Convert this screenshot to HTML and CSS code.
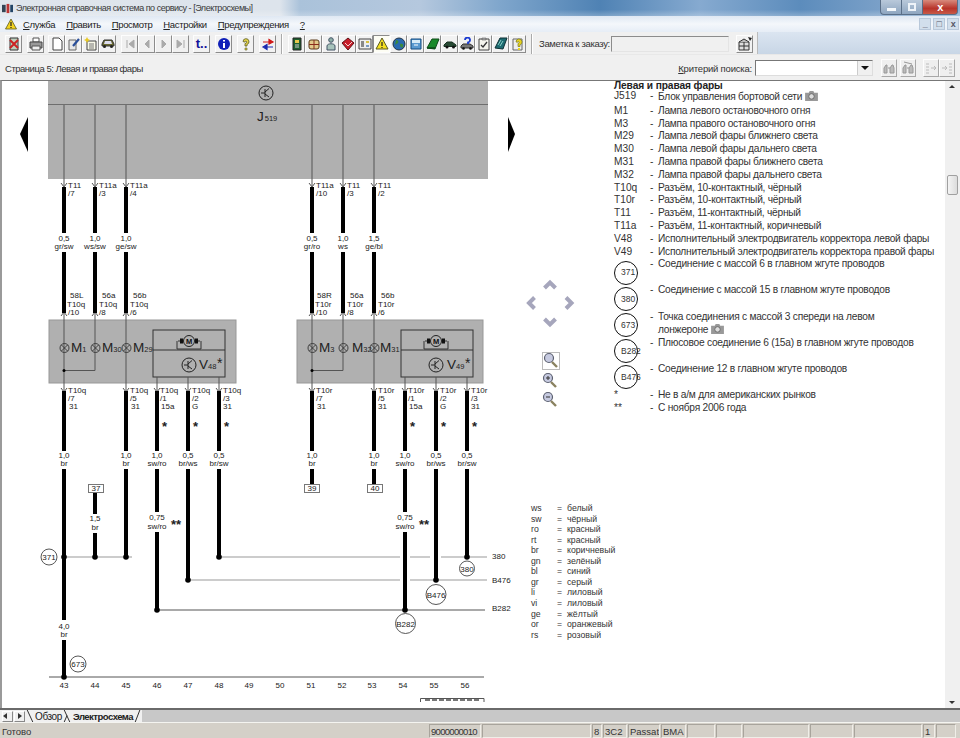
FILE: index.html
```html
<!DOCTYPE html>
<html lang="ru">
<head>
<meta charset="utf-8">
<title>Электронная справочная система по сервису</title>
<link rel="stylesheet" href="styles.css">
</head>
<body>
<div class="app">
  <header class="titlebar">
    <svg class="appicon" viewBox="0 0 14 12"><rect x="1" y="2" width="4" height="8" fill="#345"/><rect x="6" y="1" width="3" height="10" fill="#b33"/><rect x="10" y="2" width="3" height="8" fill="#246"/></svg>
    <span class="title-text">Электронная справочная система по сервису - [Электросхемы]</span>
    <div class="winctl">
      <span class="wbtn wmin"><i></i></span>
      <span class="wbtn wmax"><i></i></span>
      <span class="wbtn wclose">x</span>
    </div>
  </header>

  <nav class="menubar">
    <svg class="menu-warn" viewBox="0 0 12 12"><path d="M6 1 11.5 11H.5Z" fill="#f3d321" stroke="#5a5a20" stroke-width=".8"/><path d="M6 4v4M6 9v1" stroke="#222" stroke-width="1.2"/></svg>
    <span class="menu"><u>С</u>лужба</span>
    <span class="menu"><u>П</u>равить</span>
    <span class="menu"><u>П</u>росмотр</span>
    <span class="menu"><u>Н</u>астройки</span>
    <span class="menu"><u>П</u>редупреждения</span>
    <span class="menu"><u>?</u></span>
    <div class="mdi">
      <span class="mdibtn">_</span><span class="mdibtn">&#9633;</span><span class="mdibtn">x</span>
    </div>
  </nav>

  <div class="toolbar">
    <div class="tools">
      <button class="tb"><svg viewBox="0 0 14 14"><path d="M3 1h8v12H3z" fill="#bcd0bc" stroke="#333"/><path d="M3 3l8 8M11 3l-8 8" stroke="#c22" stroke-width="2"/></svg></button>
      <button class="tb gap5"><svg viewBox="0 0 14 14"><path d="M4 1h6v4H4z" fill="#fff" stroke="#555"/><path d="M1 5h12v6H1z" fill="#999" stroke="#444"/><path d="M3 9h8v4H3z" fill="#eee" stroke="#555"/></svg></button>
      <button class="tb gap4"><svg viewBox="0 0 14 14"><path d="M3 1h6l3 3v9H3z" fill="#fff" stroke="#444"/></svg></button>
      <button class="tb"><svg viewBox="0 0 14 14"><path d="M2 3h7v10H2z" fill="#e8e8e8" stroke="#666"/><path d="M6 9l6-7" stroke="#2a4f9a" stroke-width="2.2"/></svg></button>
      <button class="tb"><svg viewBox="0 0 14 14"><path d="M3 4h9v9H3z" fill="#f8f8e8" stroke="#444"/><path d="M5 7h5M5 9h5M5 11h5" stroke="#777"/><path d="M3 0l1 2 2 1-2 1-1 2-1-2-2-1 2-1z" fill="#e8c820"/></svg></button>
      <button class="tb"><svg viewBox="0 0 14 14"><path d="M1 9V7l2-4h8l2 4v2z" fill="#6a6a30" stroke="#333"/><path d="M4 4h6l1 3H3z" fill="#dde"/><circle cx="3.5" cy="9.5" r="1.5" fill="#222"/><circle cx="10.5" cy="9.5" r="1.5" fill="#222"/></svg></button>

      <button class="tb gap5 off"><svg viewBox="0 0 14 14"><path d="M4 3v8M11 3 6 7l5 4z" fill="#aaa" stroke="#aaa"/></svg></button>
      <button class="tb off"><svg viewBox="0 0 14 14"><path d="M9 3 5 7l4 4z" fill="#aaa" stroke="#aaa"/></svg></button>
      <button class="tb off"><svg viewBox="0 0 14 14"><path d="M5 3l4 4-4 4z" fill="#aaa" stroke="#aaa"/></svg></button>
      <button class="tb off"><svg viewBox="0 0 14 14"><path d="M10 3v8M3 3l5 4-5 4z" fill="#aaa" stroke="#aaa"/></svg></button>

      <button class="tb gap4 tlet">t..</button>
      <button class="tb gap5"><svg viewBox="0 0 14 14"><circle cx="7" cy="7" r="6" fill="#1020b8"/><path d="M7 3v1.5M7 6v5" stroke="#fff" stroke-width="2"/></svg></button>
      <button class="tb gap5"><svg viewBox="0 0 14 14"><path d="M4 4.500a3 3 0 1 1 4 3V9H6V6.500c1.500-.3 2-1 1.500-2-.5-.6-1.500-.3-1.500.6z" fill="#e3d34a" stroke="#5a5a20" stroke-width=".8"/><path d="M6 11h2v2H6z" fill="#e3d34a" stroke="#5a5a20" stroke-width=".6"/></svg></button>
      <button class="tb gap5"><svg viewBox="0 0 14 14"><path d="M2 5h8M8 2.500 12 5 8 7z" fill="#d01818" stroke="#d01818" stroke-width="1.200"/><path d="M12 10H4M6 7.500 2 10l4 2.500z" fill="#1a2ab0" stroke="#1a2ab0" stroke-width="1.200"/></svg></button>
      <span class="tsep"></span>

      <button class="tb"><svg viewBox="0 0 14 14"><path d="M3 1h8v12H3z" fill="#1f5f2f" stroke="#222"/><path d="M5 3h4v3H5z" fill="#e6c84a"/><path d="M5 8h4M5 10h4" stroke="#ccc"/></svg></button>
      <button class="tb"><svg viewBox="0 0 14 14"><rect x="2" y="3" width="10" height="9" rx="2" fill="#e2c98a" stroke="#5a3a1a"/><path d="M7 3v9M2 7.500h10" stroke="#8a2a1a"/></svg></button>
      <button class="tb"><svg viewBox="0 0 14 14"><circle cx="7" cy="3" r="2.300" fill="#8fb0a8" stroke="#456"/><path d="M3 13V9c0-3 8-3 8 0v4z" fill="#a8c4bc" stroke="#456"/></svg></button>
      <button class="tb"><svg viewBox="0 0 14 14"><path d="M1 6 7 1l6 5-6 7z" fill="#c81e2a" stroke="#601015"/><path d="M4 6l3 3 4-4" stroke="#f0d0d0" fill="none"/></svg></button>
      <button class="tb"><svg viewBox="0 0 14 14"><path d="M1 2h12v10H1z" fill="#eee" stroke="#444"/><path d="M3 4h3v6H3z" fill="#888"/><path d="M8 4h3v2H8z" fill="#d8c040"/><path d="M8 8h3v2H8z" fill="#7a9ac0"/></svg></button>
      <button class="tb on"><svg viewBox="0 0 14 14"><path d="M7 1l6 11H1z" fill="#f5e020" stroke="#5a5a20"/><path d="M7 5v4M7 10v1" stroke="#222" stroke-width="1.200"/></svg></button>
      <button class="tb"><svg viewBox="0 0 14 14"><circle cx="7" cy="7" r="6" fill="#2a6ab0" stroke="#234"/><path d="M4 3c2 0 3 2 2 3S3 7 3 9M8 7c2-1 4 0 3 3-1 1-3 1-3-3z" fill="#3c8a3c"/></svg></button>
      <button class="tb"><svg viewBox="0 0 14 14"><path d="M2 2h10v10H2z" fill="#5a9ad0" stroke="#134a80"/><path d="M3 3h8v3H3z" fill="#d8ecf8"/><path d="M5 8h4" stroke="#fff"/></svg></button>
      <button class="tb"><svg viewBox="0 0 14 14"><path d="M1 11 6 2h7l-4 10z" fill="#1a8a2a" stroke="#0e4a18"/><path d="M1 11h8" stroke="#0e4a18" stroke-width="1.500"/></svg></button>
      <button class="tb"><svg viewBox="0 0 14 14"><path d="M1 9.500V8l3-3h5l4 3v1.500z" fill="#284a34" stroke="#16301f"/><circle cx="4" cy="10" r="1.500" fill="#111"/><circle cx="10.500" cy="10" r="1.500" fill="#111"/></svg></button>
      <button class="tb"><svg viewBox="0 0 14 14"><path d="M1 11V9l2-2h7l3 2v2z" fill="#777" stroke="#333"/><circle cx="3.500" cy="11.500" r="1.300" fill="#111"/><circle cx="10.500" cy="11.500" r="1.300" fill="#111"/><path d="M5 3a2.500 2.500 0 1 1 3 2.500V7" fill="none" stroke="#1a3ad0" stroke-width="1.800"/></svg></button>
      <button class="tb"><svg viewBox="0 0 14 14"><path d="M2 2h10v11H2z" fill="#f4f4ec" stroke="#444"/><path d="M5 1h4v2H5z" fill="#aaa" stroke="#444" stroke-width=".5"/><path d="M4 8l2 2 4-5" fill="none" stroke="#333" stroke-width="1.300"/></svg></button>
      <button class="tb"><svg viewBox="0 0 14 14"><path d="M1 11 6 1h7l-4 11z" fill="#1d6a70" stroke="#0e3034"/><path d="M4 8l3-5M6 9l3-5" stroke="#bfe" stroke-width=".7"/></svg></button>
      <button class="tb"><svg viewBox="0 0 14 14"><path d="M2 2h9v11H2z" fill="#eee" stroke="#666"/><path d="M5 5a3 3 0 1 1 4 2.800V9.500H7V6.500c1.300 0 1.500-2 .3-2-.6 0-.8.400-.8.800z" fill="#e8d420" stroke="#6a6a10" stroke-width=".6"/><path d="M7 11h2v2H7z" fill="#e8d420"/></svg></button>
      <span class="tsep sep-b"></span>

      <label class="note-label">Заметка к заказу:</label>
      <span class="note-input"></span>
      <button class="tb gap7"><svg viewBox="0 0 14 14"><path d="M1 5h10v8H1z" fill="#ddd" stroke="#333"/><path d="M1 5l5-3 5 3" fill="#bbb" stroke="#333"/><path d="M6 5v8M1 9h10" stroke="#333"/><path d="M10 0l4 1-2 3z" fill="#222"/></svg></button>
    </div>
    <div class="toolfill"></div>
  </div>

  <div class="pagebar">
    <span class="page-name">Страница 5: Левая и правая фары</span>
    <div class="search">
      <span class="search-label"><u>К</u>ритерий поиска:</span>
      <span class="combo"><i class="combo-arrow"></i></span>
      <button class="tb sb gap8"><svg viewBox="0 0 14 14"><path d="M2 12V7l2-3h1v8zM8 12V7l2-3h1l1 3v5z" fill="#bbb" stroke="#999"/><path d="M6 7h2" stroke="#999"/></svg></button>
      <button class="tb sb gap3"><svg viewBox="0 0 14 14"><path d="M2 12V7l2-3h1v8zM8 12V7l2-3h1l1 3v5z" fill="#bbb" stroke="#999"/><path d="M6 7h2M3 1l8 2" stroke="#999"/></svg></button>
      <button class="tb sb gap7"><svg viewBox="0 0 14 14"><path d="M2 3h3M2 6h3M2 9h3M2 12h3" stroke="#bbb"/><path d="M7 7h5M10 5l2 2-2 2" stroke="#bbb" fill="none"/></svg></button>
      <button class="tb sb"><svg viewBox="0 0 14 14"><path d="M9 3h3M9 6h3M9 9h3M9 12h3" stroke="#bbb"/><path d="M2 7h5M5 5l2 2-2 2" stroke="#bbb" fill="none"/></svg></button>
    </div>
  </div>

  <main class="workspace">
    <svg class="diagram" viewBox="2 81 608 627">
      <defs>
        <symbol id="tr" viewBox="-8 -8 16 16" overflow="visible">
          <circle r="7" fill="none" stroke="#222" stroke-width="1"/>
          <path d="M-1-4V4M-1-1 3-4.500M-1 1l4 3M-5 0h4" fill="none" stroke="#222" stroke-width="1"/>
        </symbol>
        <symbol id="lamp" viewBox="-5 -5 10 10" overflow="visible">
          <circle r="4.500" fill="none" stroke="#333" stroke-width=".9"/>
          <path d="M-3.200-3.200 3.200 3.200M3.200-3.200-3.200 3.200" stroke="#333" stroke-width=".9"/>
        </symbol>
        <symbol id="motor" viewBox="-14 -9 28 18" overflow="visible">
          <path d="M-11 0H-6M6 0H11M-12 0V8H12V0" fill="none" stroke="#333"/>
          <path d="M-9-2.500h3v5h-3zM6-2.500h3v5H6z" fill="#111"/>
          <circle r="5.500" fill="#b0b0b0" stroke="#222"/>
          <text class="mm" y="3">M</text>
        </symbol>
      </defs>

      <rect class="block" x="48" y="81" width="440" height="98"/>
      <path class="midline" d="M48 104.500H488"/>
      <use href="#tr" x="258" y="85" width="16" height="16"/>
      <text class="big" x="257" y="121">J<tspan class="sub" dx="1">519</tspan></text>

      <path class="nav-tri" d="M28 117 20 134l8 18z"/>
      <path class="nav-tri" d="M508 117l7 17-7 18z"/>

      <rect class="block bb" x="49" y="320" width="187" height="63"/>
      <rect class="block bb" x="297" y="320" width="186" height="63"/>
      <rect class="inner" x="153" y="330" width="72" height="47"/>
      <rect class="inner" x="401" y="330" width="72" height="47"/>
      <path class="inner-line" d="M153 350H225M401 350H473"/>

      <path class="thin" d="M64 105V186M95 105V186M126 105V186M312 105V186M343 105V186M374 105V186"/>
      <path class="thin" d="M64 313V391M95 313V370.500H64M126 313V391M312 313V391M343 313V370.500H312M374 313V391"/>
      <path class="thin" d="M157 377V391M188 377V391M219 377V391M405 377V391M436 377V391M467 377V391"/>
      <path class="arrows" d="M61 183l3 4 3-4M92 183l3 4 3-4M123 183l3 4 3-4M309 183l3 4 3-4M340 183l3 4 3-4M371 183l3 4 3-4"/>
      <path class="arrows" d="M61 316l3-4 3 4M92 316l3-4 3 4M123 316l3-4 3 4M309 316l3-4 3 4M340 316l3-4 3 4M371 316l3-4 3 4"/>
      <path class="arrows" d="M61 388l3 4 3-4M123 388l3 4 3-4M154 388l3 4 3-4M185 388l3 4 3-4M216 388l3 4 3-4M309 388l3 4 3-4M371 388l3 4 3-4M402 388l3 4 3-4M433 388l3 4 3-4M464 388l3 4 3-4"/>
      <circle class="dot" cx="64" cy="370.500" r="1.500"/>
      <circle class="dot" cx="312" cy="370.500" r="1.500"/>

      <path class="thick" d="M64 187V233M64 252V313M95 187V233M95 252V313M126 187V233M126 252V313M312 187V233M312 252V313M343 187V233M343 252V313M374 187V233M374 252V313"/>
      <path class="thick" d="M64 391V451M64 469V620M64 640V677M126 391V451M126 469V557M157 391V451M157 469V512M157 532V610M188 391V451M188 469V580M219 391V451M219 469V557"/>
      <path class="thick" d="M312 391V451M312 469V484M374 391V451M374 469V484M405 391V451M405 469V512M405 532V610M436 391V451M436 469V580M467 391V451M467 469V557M95 492V514M95 533V557"/>

      <path class="hline" d="M64 557H132M219 557H400M410 557H430M441 557H487M188 580H400M410 580H487"/>
      <path class="hdark" d="M157 610H485M49 677H484"/>
      <circle class="node" cx="64" cy="557" r="2.800"/><circle class="node" cx="95" cy="557" r="2.800"/><circle class="node" cx="126" cy="557" r="2.800"/>
      <circle class="node" cx="219" cy="557" r="2.800"/><circle class="node" cx="188" cy="580" r="2.800"/><circle class="node" cx="157" cy="610" r="2.800"/>
      <circle class="node" cx="467" cy="557" r="2.800"/><circle class="node" cx="436" cy="580" r="2.800"/><circle class="node" cx="405" cy="610" r="2.800"/><circle class="node" cx="64" cy="677" r="2.800"/>

      <text class="l" x="68" y="188">T11</text><text class="l" x="68" y="196">/7</text>
      <text class="l" x="99" y="188">T11a</text><text class="l" x="99" y="196">/3</text>
      <text class="l" x="130" y="188">T11a</text><text class="l" x="130" y="196">/4</text>
      <text class="l" x="316" y="188">T11a</text><text class="l" x="316" y="196">/10</text>
      <text class="l" x="347" y="188">T11</text><text class="l" x="347" y="196">/3</text>
      <text class="l" x="378" y="188">T11</text><text class="l" x="378" y="196">/2</text>

      <text class="c" x="64" y="241">0,5</text><text class="c" x="64" y="249">gr/sw</text>
      <text class="c" x="95" y="241">1,0</text><text class="c" x="95" y="249">ws/sw</text>
      <text class="c" x="126" y="241">1,0</text><text class="c" x="126" y="249">ge/sw</text>
      <text class="c" x="312" y="241">0,5</text><text class="c" x="312" y="249">gr/ro</text>
      <text class="c" x="343" y="241">1,0</text><text class="c" x="343" y="249">ws</text>
      <text class="c" x="374" y="241">1,5</text><text class="c" x="374" y="249">ge/bl</text>

      <text class="l" x="70" y="298">58L</text><text class="l" x="67" y="307">T10q</text><text class="l" x="68" y="315">/10</text>
      <text class="l" x="102" y="298">56a</text><text class="l" x="99" y="307">T10q</text><text class="l" x="99" y="315">/8</text>
      <text class="l" x="133" y="298">56b</text><text class="l" x="130" y="307">T10q</text><text class="l" x="130" y="315">/6</text>
      <text class="l" x="317" y="298">58R</text><text class="l" x="315" y="307">T10r</text><text class="l" x="316" y="315">/10</text>
      <text class="l" x="350" y="298">56a</text><text class="l" x="347" y="307">T10r</text><text class="l" x="347" y="315">/8</text>
      <text class="l" x="381" y="298">56b</text><text class="l" x="378" y="307">T10r</text><text class="l" x="378" y="315">/6</text>

      <use href="#lamp" x="59.500" y="343" width="10" height="10"/>
      <use href="#lamp" x="90.500" y="343" width="10" height="10"/>
      <use href="#lamp" x="121.500" y="343" width="10" height="10"/>
      <use href="#lamp" x="307.500" y="343" width="10" height="10"/>
      <use href="#lamp" x="338.500" y="343" width="10" height="10"/>
      <use href="#lamp" x="369.500" y="343" width="10" height="10"/>
      <text class="big" x="71" y="352">M<tspan class="sub">1</tspan></text>
      <text class="big" x="102" y="352">M<tspan class="sub">30</tspan></text>
      <text class="big" x="133" y="352">M<tspan class="sub">29</tspan></text>
      <text class="big" x="319" y="352">M<tspan class="sub">3</tspan></text>
      <text class="big" x="352" y="352">M<tspan class="sub">32</tspan></text>
      <text class="big" x="380" y="352">M<tspan class="sub">31</tspan></text>

      <use href="#motor" x="175" y="332" width="28" height="18"/>
      <use href="#motor" x="422" y="332" width="28" height="18"/>
      <use href="#tr" x="181" y="357" width="16" height="16"/>
      <use href="#tr" x="428" y="357" width="16" height="16"/>
      <text class="big" x="199" y="369">V<tspan class="sub">48</tspan></text>
      <text class="star" x="217" y="368">*</text>
      <text class="big" x="447" y="369">V<tspan class="sub">49</tspan></text>
      <text class="star" x="465" y="368">*</text>

      <text class="l" x="68" y="393">T10q</text><text class="l" x="68" y="401">/7</text><text class="l" x="69" y="409">31</text>
      <text class="l" x="130" y="393">T10q</text><text class="l" x="130" y="401">/5</text><text class="l" x="131" y="409">31</text>
      <text class="l" x="160" y="393">T10q</text><text class="l" x="160" y="401">/1</text><text class="l" x="161" y="409">15a</text>
      <text class="l" x="192" y="393">T10q</text><text class="l" x="192" y="401">/2</text><text class="l" x="192" y="409">G</text>
      <text class="l" x="223" y="393">T10q</text><text class="l" x="223" y="401">/3</text><text class="l" x="223" y="409">31</text>
      <text class="l" x="316" y="393">T10r</text><text class="l" x="316" y="401">/7</text><text class="l" x="317" y="409">31</text>
      <text class="l" x="378" y="393">T10r</text><text class="l" x="378" y="401">/5</text><text class="l" x="378" y="409">31</text>
      <text class="l" x="408" y="393">T10r</text><text class="l" x="408" y="401">/1</text><text class="l" x="409" y="409">15a</text>
      <text class="l" x="440" y="393">T10r</text><text class="l" x="440" y="401">/2</text><text class="l" x="440" y="409">G</text>
      <text class="l" x="471" y="393">T10r</text><text class="l" x="471" y="401">/3</text><text class="l" x="471" y="409">31</text>

      <text class="ast" x="162" y="431">*</text><text class="ast" x="193" y="431">*</text><text class="ast" x="224" y="431">*</text>
      <text class="ast" x="410" y="431">*</text><text class="ast" x="441" y="431">*</text><text class="ast" x="472" y="431">*</text>
      <text class="ast" x="171" y="529">**</text><text class="ast" x="419" y="529">**</text>

      <text class="c" x="64" y="458">1,0</text><text class="c" x="64" y="466">br</text>
      <text class="c" x="126" y="458">1,0</text><text class="c" x="126" y="466">br</text>
      <text class="c" x="157" y="458">1,0</text><text class="c" x="157" y="466">sw/ro</text>
      <text class="c" x="188" y="458">0,5</text><text class="c" x="188" y="466">br/ws</text>
      <text class="c" x="219" y="458">0,5</text><text class="c" x="219" y="466">br/sw</text>
      <text class="c" x="312" y="458">1,0</text><text class="c" x="312" y="466">br</text>
      <text class="c" x="374" y="458">1,0</text><text class="c" x="374" y="466">br</text>
      <text class="c" x="405" y="458">1,0</text><text class="c" x="405" y="466">sw/ro</text>
      <text class="c" x="436" y="458">0,5</text><text class="c" x="436" y="466">br/ws</text>
      <text class="c" x="467" y="458">0,5</text><text class="c" x="467" y="466">br/sw</text>

      <rect class="ref" x="88.500" y="484.500" width="15" height="8"/><text class="c" x="96" y="491">37</text>
      <rect class="ref" x="304.500" y="484.500" width="15" height="8"/><text class="c" x="312" y="491">39</text>
      <rect class="ref" x="367.500" y="484.500" width="15" height="8"/><text class="c" x="375" y="491">40</text>

      <text class="c" x="95" y="521">1,5</text><text class="c" x="95" y="530">br</text>
      <text class="c" x="157" y="520">0,75</text><text class="c" x="157" y="529">sw/ro</text>
      <text class="c" x="405" y="520">0,75</text><text class="c" x="405" y="529">sw/ro</text>
      <text class="c" x="64" y="629">4,0</text><text class="c" x="64" y="637">br</text>

      <circle class="ring" cx="49" cy="557" r="8"/><text class="c" x="49" y="560">371</text>
      <circle class="ring" cx="78" cy="664" r="8"/><text class="c" x="78" y="667">673</text>
      <circle class="ring" cx="467" cy="568.500" r="7.500"/><text class="c" x="467" y="571.500">380</text>
      <circle class="ring" cx="436" cy="594.500" r="10"/><text class="c" x="436" y="597.500">B476</text>
      <circle class="ring" cx="405.500" cy="623.500" r="10"/><text class="c" x="405.500" y="626.500">B282</text>
      <text class="l" x="492" y="559">380</text>
      <text class="l" x="492" y="583">B476</text>
      <text class="l" x="492" y="611">B282</text>

      <text class="c" x="64" y="688">43</text><text class="c" x="95" y="688">44</text><text class="c" x="126" y="688">45</text>
      <text class="c" x="157" y="688">46</text><text class="c" x="188" y="688">47</text><text class="c" x="219" y="688">48</text>
      <text class="c" x="249" y="688">49</text><text class="c" x="280" y="688">50</text><text class="c" x="311" y="688">51</text>
      <text class="c" x="342" y="688">52</text><text class="c" x="372" y="688">53</text><text class="c" x="403" y="688">54</text>
      <text class="c" x="434" y="688">55</text><text class="c" x="465" y="688">56</text>
      <path class="stub" d="M420.500 702V698.500H484V702"/>
      <path class="stubdash" d="M425 700H480"/>

      <path class="chev" d="M544.500 288 550 282.500 555.500 288"/>
      <path class="chev" d="M534.500 297.500 529 303 534.500 308.500"/>
      <path class="chev" d="M566 297.500 571.500 303 566 308.500"/>
      <path class="chev" d="M544.500 319 550 324.500 555.500 319"/>
      <rect class="focusbox" x="542.500" y="352.500" width="17" height="17"/>
      <g class="zoomi"><circle cx="549" cy="358" r="4.500"/><path class="zh" d="M552 362l5 5"/></g>
      <g class="zoomi"><circle cx="548" cy="378" r="4.500"/><path class="zh" d="M551 382l5 5"/><path class="zs" d="M546 378h4M548 376v4"/></g>
      <g class="zoomi"><circle cx="548" cy="397" r="4.500"/><path class="zh" d="M551 401l5 5"/><path class="zs" d="M546 397h4"/></g>

      <g class="colors">
        <text x="531" y="511">ws</text><text x="557" y="511">=</text><text x="567" y="511">белый</text>
        <text x="531" y="522">sw</text><text x="557" y="522">=</text><text x="567" y="522">чёрный</text>
        <text x="531" y="532">ro</text><text x="557" y="532">=</text><text x="567" y="532">красный</text>
        <text x="531" y="543">rt</text><text x="557" y="543">=</text><text x="567" y="543">красный</text>
        <text x="531" y="553">br</text><text x="557" y="553">=</text><text x="567" y="553">коричневый</text>
        <text x="531" y="564">gn</text><text x="557" y="564">=</text><text x="567" y="564">зелёный</text>
        <text x="531" y="574">bl</text><text x="557" y="574">=</text><text x="567" y="574">синий</text>
        <text x="531" y="585">gr</text><text x="557" y="585">=</text><text x="567" y="585">серый</text>
        <text x="531" y="595">li</text><text x="557" y="595">=</text><text x="567" y="595">лиловый</text>
        <text x="531" y="606">vi</text><text x="557" y="606">=</text><text x="567" y="606">лиловый</text>
        <text x="531" y="617">ge</text><text x="557" y="617">=</text><text x="567" y="617">жёлтый</text>
        <text x="531" y="627">or</text><text x="557" y="627">=</text><text x="567" y="627">оранжевый</text>
        <text x="531" y="638">rs</text><text x="557" y="638">=</text><text x="567" y="638">розовый</text>
      </g>
    </svg>

    <section class="legend">
      <h2 class="legend-title">Левая и правая фары</h2>
      <div class="row first"><span class="code">J519</span><span class="dash">-</span><span class="txt">Блок управления бортовой сети <svg class="cam" viewBox="0 0 14 12"><path d="M0 3h4l1-2h4l1 2h4v9H0z" fill="#999"/><circle cx="7" cy="7" r="3" fill="#ddd" stroke="#666"/></svg></span></div>
      <div class="row"><span class="code">M1</span><span class="dash">-</span><span class="txt">Лампа левого остановочного огня</span></div>
      <div class="row"><span class="code">M3</span><span class="dash">-</span><span class="txt">Лампа правого остановочного огня</span></div>
      <div class="row"><span class="code">M29</span><span class="dash">-</span><span class="txt">Лампа левой фары ближнего света</span></div>
      <div class="row"><span class="code">M30</span><span class="dash">-</span><span class="txt">Лампа левой фары дальнего света</span></div>
      <div class="row"><span class="code">M31</span><span class="dash">-</span><span class="txt">Лампа правой фары ближнего света</span></div>
      <div class="row"><span class="code">M32</span><span class="dash">-</span><span class="txt">Лампа правой фары дальнего света</span></div>
      <div class="row"><span class="code">T10q</span><span class="dash">-</span><span class="txt">Разъём, 10-контактный, чёрный</span></div>
      <div class="row"><span class="code">T10r</span><span class="dash">-</span><span class="txt">Разъём, 10-контактный, чёрный</span></div>
      <div class="row"><span class="code">T11</span><span class="dash">-</span><span class="txt">Разъём, 11-контактный, чёрный</span></div>
      <div class="row"><span class="code">T11a</span><span class="dash">-</span><span class="txt">Разъём, 11-контактный, коричневый</span></div>
      <div class="row"><span class="code">V48</span><span class="dash">-</span><span class="txt">Исполнительный электродвигатель корректора левой фары</span></div>
      <div class="row"><span class="code">V49</span><span class="dash">-</span><span class="txt">Исполнительный электродвигатель корректора правой фары</span></div>
      <div class="row tall"><span class="code"><span class="circ">371</span></span><span class="dash">-</span><span class="txt">Соединение с массой 6 в главном жгуте проводов</span></div>
      <div class="row tall"><span class="code"><span class="circ">380</span></span><span class="dash">-</span><span class="txt">Соединение с массой 15 в главном жгуте проводов</span></div>
      <div class="row tall"><span class="code"><span class="circ">673</span></span><span class="dash">-</span><span class="txt">Точка соединения с массой 3 спереди на левом<br>лонжероне <svg class="cam" viewBox="0 0 14 12"><path d="M0 3h4l1-2h4l1 2h4v9H0z" fill="#999"/><circle cx="7" cy="7" r="3" fill="#ddd" stroke="#666"/></svg></span></div>
      <div class="row tall"><span class="code"><span class="circ">B282</span></span><span class="dash">-</span><span class="txt">Плюсовое соединение 6 (15а) в главном жгуте проводов</span></div>
      <div class="row tall"><span class="code"><span class="circ">B476</span></span><span class="dash">-</span><span class="txt">Соединение 12 в главном жгуте проводов</span></div>
      <div class="row"><span class="code">*</span><span class="dash">-</span><span class="txt">Не в а/м для американских рынков</span></div>
      <div class="row"><span class="code">**</span><span class="dash">-</span><span class="txt">С ноября 2006 года</span></div>
    </section>

    <aside class="scrollbar">
      <span class="sb-up"></span>
      <span class="sb-thumb"></span>
      <span class="sb-down"></span>
    </aside>
  </main>

  <div class="tabstrip">
    <span class="tabnav"><i class="tl"></i></span>
    <span class="tabnav"><i class="tr"></i></span>
    <svg class="slant" viewBox="0 0 8 13"><path d="M1 0 7 13" /></svg>
    <span class="tab">Обзор</span>
    <svg class="slant" viewBox="0 0 8 13"><path d="M1 0 7 13M4 6 1 13"/></svg>
    <span class="tab cur">Электросхема</span>
    <svg class="slant" viewBox="0 0 8 13"><path d="M6 0 1 13"/></svg>
    <span class="tabrest"></span>
  </div>

  <footer class="statusbar">
    <span class="ready">Готово</span>
    <span class="pane w51 tight">9000000010</span>
    <span class="pane w109"></span>
    <span class="pane w10">8</span>
    <span class="pane w23">3C2</span>
    <span class="pane w31">Passat</span>
    <span class="pane w25">BMA</span>
    <span class="pane w27"></span>
    <span class="pane w26"></span>
    <span class="pane w65"></span>
    <span class="pane w43"></span>
    <span class="pane w67"></span>
    <span class="pane w11">1</span>
    <span class="pane w20"></span>
  </footer>
</div>
</body>
</html>
```

FILE: styles.css
```css
* { box-sizing: border-box; }
html, body { margin: 0; padding: 0; }
body {
  width: 960px;
  height: 738px;
  overflow: hidden;
  font-family: "Liberation Sans", Arial, sans-serif;
  color: #2a2a2a;
}
.app { width: 960px; height: 738px; display: flex; flex-direction: column; background: #f0f0f0; }

/* title bar */
.titlebar {
  height: 16px;
  flex: none;
  display: flex;
  align-items: center;
  padding-left: 1px;
  font-size: 9px;
  letter-spacing: -.48px;
  color: #3a3a3a;
  background:
    linear-gradient(180deg, rgba(255,255,255,0) 60%, rgba(255,255,255,.25) 100%),
    linear-gradient(90deg, #dfe5ec 0, #dde4ec 280px, #aac2da 300px, #b5c8de 420px, #7fa6cc 500px, #4f82b4 600px, #86aad0 700px, #5c8cbc 800px, #7aa0c8 880px, #8ab0d4 960px);
}
.appicon { width: 13px; height: 11px; margin-right: 2px; }
.title-text { white-space: nowrap; }
.winctl { margin-left: auto; margin-right: 2px; display: flex; height: 15px; align-self: flex-start; }
.wbtn {
  display: flex; align-items: center; justify-content: center;
  height: 15px; color: #fff; font-size: 11px; font-weight: bold;
  border: 1px solid #5a6f88; border-top: 0;
  background: linear-gradient(180deg, #b9c9da, #8ea6c0);
}
.wbtn i { display: block; }
.wmin { width: 21px; border-radius: 0 0 0 4px; border-right: 0; }
.wmin i { width: 9px; height: 3px; background: #f4f8fb; margin-top: 5px; }
.wmax { width: 21px; border-right: 0; }
.wmax i { width: 8px; height: 8px; border: 2px solid #eef3f8; }
.wclose { width: 36px; border-radius: 0 0 4px 0; background: linear-gradient(180deg, #d88a7c, #b8342a 60%, #c85a48); }

/* menu */
.menubar {
  height: 16px;
  flex: none;
  display: flex;
  align-items: center;
  gap: 11px;
  padding-left: 5px;
  font-size: 9.5px;
  letter-spacing: -.35px;
  color: #222;
  background: linear-gradient(180deg, #dfe8f3, #f4f7fb 50%, #e6edf6);
}
.menu-warn { width: 12px; height: 12px; margin-right: -5px; }
.menu { white-space: nowrap; }
.mdi { margin-left: auto; margin-right: 1px; display: flex; gap: 2px; }
.mdibtn {
  width: 12px; height: 12px;
  display: flex; align-items: center; justify-content: center;
  font-size: 9px; line-height: 9px; font-weight: bold; color: #556;
  background: #d2dfec; border: 1px solid #b8c8da;
}

/* toolbar */
.toolbar { height: 23px; flex: none; display: flex; border-bottom: 1px solid #e8e8e8; }
.tools { display: flex; align-items: center; padding-left: 5px; padding-top: 1px; width: 758px; flex: none; background: #f0f0f0; border-right: 1px solid #bbb; }
.toolfill { flex: 1; background: linear-gradient(180deg, #dbe5f1, #c8d6e6); }
.tb {
  flex: none;
  width: 17px;
  height: 18px;
  padding: 0;
  margin: 0;
  display: flex;
  align-items: center;
  justify-content: center;
  background: #f2f2f2;
  border: 1px solid;
  border-color: #fdfdfd #8c8c8c #8c8c8c #fdfdfd;
  font-family: "Liberation Sans", Arial, sans-serif;
}
.tb svg { width: 14px; height: 14px; display: block; }
.tb.on { background: #fdfdf4; border-color: #8c8c8c #fdfdfd #fdfdfd #8c8c8c; }
.tb.off { background: #f0f0f0; }
.tlet { color: #12129a; font-size: 13px; font-weight: bold; line-height: 13px; }
.gap3 { margin-left: 3px; }
.gap4 { margin-left: 4px; }
.gap5 { margin-left: 5px; }
.gap7 { margin-left: 7px; }
.gap8 { margin-left: 8px; }
.tsep { width: 2px; height: 20px; margin: 0 5px; border-left: 1px solid #aaa; border-right: 1px solid #fff; }
.tsep.sep-b { margin: 0 6px 0 5px; }
.note-label { font-size: 9.5px; letter-spacing: -.35px; white-space: nowrap; width: 72px; color: #333; }
.note-input { width: 118px; height: 16px; background: #f0f0f0; border: 1px solid; border-color: #8c8c8c #e4e4e4 #e4e4e4 #8c8c8c; }

/* page bar */
.pagebar {
  height: 25px;
  flex: none;
  display: flex;
  align-items: center;
  justify-content: space-between;
  padding: 1px 5px 0;
  font-size: 9.5px;
  color: #333;
}
.page-name { letter-spacing: -.48px; }
.search-label { letter-spacing: -.2px; white-space: nowrap; }
.search { display: flex; align-items: center; }
.combo { position: relative; width: 118px; height: 16px; margin-left: 3px; background: #fff; border: 1px solid; border-color: #777 #ddd #ddd #777; }
.combo-arrow { position: absolute; right: 0; top: 0; width: 15px; height: 14px; background: #f0f0f0; border-left: 1px solid #ccc; }
.combo-arrow::after { content: ""; position: absolute; left: 3px; top: 5px; border: 4px solid transparent; border-top: 4px solid #111; }
.tb.sb { width: 16px; height: 18px; background: #efefef; border-color: #fdfdfd #a8a8a8 #a8a8a8 #fdfdfd; }

/* workspace */
.workspace {
  flex: none;
  height: 628px;
  display: flex;
  background: #fff;
  border-top: 1px solid #777;
  border-left: 2px solid #9a9a9a;
  overflow: hidden;
}
.diagram { width: 608px; height: 627px; flex: none; display: block; overflow: visible; font-family: "Liberation Sans", Arial, sans-serif; }
.block { fill: #b0b0b0; }
.bb { stroke: #989898; stroke-width: 1; }
.midline { stroke: #6e6e6e; stroke-width: 1.2; fill: none; }
.nav-tri { fill: #000; }
.inner { fill: none; stroke: #333; stroke-width: 1; }
.inner-line { stroke: #333; stroke-width: 1; fill: none; }
.thin { stroke: #555; stroke-width: 1; fill: none; }
.arrows { stroke: #555; stroke-width: 1; fill: none; }
.thick { stroke: #000; stroke-width: 4; fill: none; }
.dot, .node { fill: #000; }
.hline { stroke: #999; stroke-width: 1; fill: none; }
.hdark { stroke: #555; stroke-width: 1; fill: none; }
.ring { fill: #fff; stroke: #444; stroke-width: .9; }
.ref { fill: #fff; stroke: #777; stroke-width: 1; }
.stub { fill: none; stroke: #555; }
.stubdash { stroke: #777; stroke-dasharray: 5 2; stroke-width: 2; }
.l { font-size: 8px; fill: #222; }
.c { font-size: 8px; fill: #222; text-anchor: middle; }
.big { font-size: 13.5px; fill: #222; }
.sub { font-size: 7.5px; }
.star { font-size: 14px; fill: #222; }
.ast { font-size: 13px; fill: #222; font-weight: bold; }
.mm { font-size: 7.500px; font-weight: bold; text-anchor: middle; fill: #111; }
.chev { fill: none; stroke: #a6a6bc; stroke-width: 4; }
.focusbox { fill: none; stroke: #777; stroke-width: 1; stroke-dasharray: 1 1; }
.zoomi circle { fill: #c6cae0; stroke: #5c6070; stroke-width: 1.2; }
.zh { stroke: #8a8260; stroke-width: 2.4; fill: none; }
.zs { stroke: #333; stroke-width: 1; fill: none; }
.colors text { font-size: 8.7px; fill: #333; }

/* legend */
.legend { flex: 1; min-width: 0; padding-left: 4px; font-size: 10.2px; line-height: 12.8px; color: #333; overflow: hidden; }
.legend-title { margin: 0; font-size: 10.2px; line-height: 9px; font-weight: bold; color: #222; letter-spacing: -.1px; white-space: nowrap; }
.row { display: grid; grid-template-columns: 36px 8px 1fr; white-space: nowrap; }
.row.first { margin-bottom: 1px; }
.txt { letter-spacing: -.25px; }
.tall { height: 26.1px; }
.row.tall .code { height: 26px; }
.circ {
  display: flex;
  align-items: center;
  width: 24px;
  height: 24px;
  margin-top: 2.500px;
  padding-left: 6px;
  border: 1.500px solid #111;
  border-radius: 50%;
  font-size: 8.500px;
  white-space: nowrap;
}
.cam { width: 13px; height: 11px; vertical-align: -1px; }

/* scrollbar */
.scrollbar { width: 15px; flex: none; background: #f0f0f0; position: relative; }
.sb-up, .sb-down { position: absolute; left: 4px; width: 0; height: 0; border: 3px solid transparent; }
.sb-up { top: 1px; border-bottom: 3px solid #333; }
.sb-down { bottom: 1px; border-top: 3px solid #333; }
.sb-thumb { position: absolute; left: 2px; top: 94px; width: 11px; height: 20px; background: linear-gradient(90deg, #f4f4f4, #dcdcdc); border: 1px solid #a0a0a0; border-radius: 2px; }

/* tabs */
.tabstrip {
  height: 14px;
  flex: none;
  display: flex;
  align-items: center;
  padding-left: 2px;
  background: #f0f0f0;
  border-top: 2px solid #6a6a6a;
  font-size: 10px;
  color: #222;
}
.tabnav { width: 11px; height: 11px; margin-right: 1px; position: relative; border: 1px solid; border-color: #fff #888 #888 #fff; }
.tabnav i { position: absolute; top: 1px; border: 3.5px solid transparent; }
.tl { left: -3px; border-right: 4px solid #333 !important; }
.tr { left: 3px; border-left: 4px solid #333 !important; }
.slant { width: 8px; height: 12px; flex: none; }
.slant path { stroke: #222; stroke-width: 1; fill: none; }
.tab { padding: 0 1px 0 1px; white-space: nowrap; letter-spacing: -.4px; }
.tab.cur { font-weight: bold; font-size: 9.5px; letter-spacing: -.5px; padding-left: 2px; }
.tabrest { flex: 1; height: 12px; background: #c8c8c8; }

/* status */
.statusbar {
  height: 16px;
  flex: none;
  display: flex;
  align-items: center;
  gap: 1px;
  padding-top: 1px;
  font-size: 9.5px;
  background: #d4d0c8;
  border-top: 1px solid #f4f4f0;
  color: #333;
}
.ready { width: 428px; padding-left: 2px; }
.pane {
  height: 14px;
  line-height: 13px;
  padding-left: 1px;
  white-space: nowrap;
  overflow: hidden;
  border: 1px solid;
  border-color: #a8a49c #f0eee8 #f0eee8 #a8a49c;
}
.tight { letter-spacing: -.7px; }
.w51 { width: 52px; }
.w109 { width: 109px; }
.w10 { width: 10px; }
.w23 { width: 24px; }
.w31 { width: 32px; }
.w25 { width: 25px; }
.w27 { width: 28px; }
.w26 { width: 26px; }
.w65 { width: 66px; }
.w43 { width: 43px; }
.w67 { width: 68px; }
.w11 { width: 12px; }
.w20 { width: 20px; }
```
